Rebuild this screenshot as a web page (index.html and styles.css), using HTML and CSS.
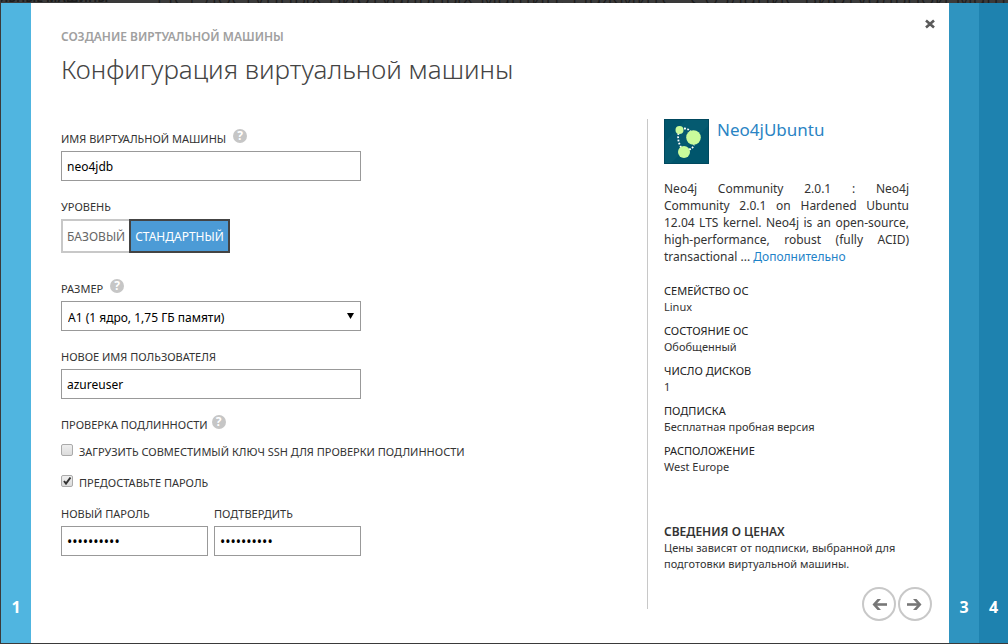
FILE: index.html
```html
<!DOCTYPE html>
<html lang="ru">
<head>
<meta charset="utf-8">
<title>Создание виртуальной машины</title>
<link rel="stylesheet" href="styles.css">
</head>
<body>
<div class="backdrop" aria-hidden="true"><span class="backdrop-tab">ВИРТУАЛЬНЫЕ МАШИНЫ</span><span class="backdrop-note">Нет доступных виртуальных машин. Нажмите "Создание виртуальной машины"</span></div>
<div class="wizard">
  <div class="rail rail-first">1</div>
  <main class="dialog">
    <button class="close" type="button" aria-label="Закрыть">
      <svg width="10" height="10" viewBox="0 0 10 10"><path d="M1 1.500 9 8.500M9 1.500 1 8.500" fill="none" stroke="#5a5a5a" stroke-width="2.600"/></svg>
    </button>
    <header class="heading">
      <p class="eyebrow">СОЗДАНИЕ ВИРТУАЛЬНОЙ МАШИНЫ</p>
      <h1 class="title">Конфигурация виртуальной машины</h1>
    </header>
    <div class="content">
      <form class="form">
        <div class="field">
          <div class="label-row"><label for="vm-name">ИМЯ ВИРТУАЛЬНОЙ МАШИНЫ</label><button class="help" type="button" aria-label="Справка">?</button></div>
          <input class="control" id="vm-name" type="text" value="neo4jdb">
        </div>
        <div class="field field-tier">
          <div class="label-row" id="tier">УРОВЕНЬ</div>
          <div class="tiers" role="group" aria-labelledby="tier">
            <button class="tier" type="button">БАЗОВЫЙ</button><button class="tier tier-on" type="button" aria-pressed="true">СТАНДАРТНЫЙ</button>
          </div>
        </div>
        <div class="field">
          <div class="label-row"><label for="size">РАЗМЕР</label><button class="help" type="button" aria-label="Справка">?</button></div>
          <div class="select-wrap">
            <select class="control select" id="size"><option>A1 (1 ядро, 1,75 ГБ памяти)</option></select>
            <svg class="arrow" width="7" height="6" viewBox="0 0 7 6"><path d="M0 0h7L3.500 6z" fill="#000"/></svg>
          </div>
        </div>
        <div class="field">
          <div class="label-row"><label for="user">НОВОЕ ИМЯ ПОЛЬЗОВАТЕЛЯ</label></div>
          <input class="control" id="user" type="text" value="azureuser">
        </div>
        <div class="auth" role="group" aria-labelledby="auth">
          <div class="label-row label-tight"><span id="auth">ПРОВЕРКА ПОДЛИННОСТИ</span><button class="help" type="button" aria-label="Справка">?</button></div>
          <label class="check-row"><input class="check" type="checkbox">ЗАГРУЗИТЬ СОВМЕСТИМЫЙ КЛЮЧ SSH ДЛЯ ПРОВЕРКИ ПОДЛИННОСТИ</label>
          <label class="check-row"><input class="check" type="checkbox" checked>ПРЕДОСТАВЬТЕ ПАРОЛЬ</label>
        </div>
        <div class="passwords">
          <div class="field"><div class="label-row"><label for="pw">НОВЫЙ ПАРОЛЬ</label></div><input class="control password" id="pw" type="password" value="neo4jadmin"></div>
          <div class="field"><div class="label-row"><label for="pw2">ПОДТВЕРДИТЬ</label></div><input class="control password" id="pw2" type="password" value="neo4jadmin"></div>
        </div>
      </form>
      <aside class="summary">
        <div class="product">
          <svg width="45" height="45" viewBox="0 0 45 45">
            <rect width="45" height="45" fill="#00556c"/>
            <path d="M22 0h23v6L6 45H0V24z" fill="#0a5f74" opacity=".5"/>
            <rect x=".5" y=".5" width="44" height="44" fill="none" stroke="#00485e"/>
            <path d="M20 9.500q5 0 7 4M14.500 14q-1.500 8 3 15M25 30.500q4-1 5-5" fill="none" stroke="#fff" stroke-width="1.800" stroke-dasharray="1.800 1.500"/>
            <circle cx="15.500" cy="11" r="4" fill="#c9fb9b"/><circle cx="29.500" cy="18.500" r="7.300" fill="#c9fb9b"/><circle cx="20" cy="33" r="6" fill="#c9fb9b"/>
          </svg>
          <h2 class="product-name">Neo4jUbuntu</h2>
        </div>
        <p class="about">Neo4j Community 2.0.1 : Neo4j Community&nbsp;2.0.1 on Hardened Ubuntu 12.04 LTS kernel. Neo4j is an open-source, high-performance, robust (fully ACID) transactional ... <a class="more" href="#">Дополнительно</a></p>
        <dl class="facts">
          <div class="fact"><dt>СЕМЕЙСТВО ОС</dt><dd>Linux</dd></div>
          <div class="fact"><dt>СОСТОЯНИЕ ОС</dt><dd>Обобщенный</dd></div>
          <div class="fact"><dt>ЧИСЛО ДИСКОВ</dt><dd>1</dd></div>
          <div class="fact"><dt>ПОДПИСКА</dt><dd>Бесплатная пробная версия</dd></div>
          <div class="fact"><dt>РАСПОЛОЖЕНИЕ</dt><dd>West Europe</dd></div>
        </dl>
        <h3 class="price-title">СВЕДЕНИЯ О ЦЕНАХ</h3>
        <p class="price">Цены зависят от подписки, выбранной для подготовки виртуальной машины.</p>
      </aside>
    </div>
    <nav class="steps">
      <button class="step" type="button" aria-label="Назад"><svg width="34" height="34" viewBox="0 0 34 34"><circle cx="17" cy="17" r="16" fill="#fff" stroke="#c8c8c8" stroke-width="2"/><path d="M12 17.500H25" fill="none" stroke="#777" stroke-width="2.600"/><path d="M15.500 12h3.500l-5 5.500 5 5.500h-3.500l-5-5.500z" fill="#777"/></svg></button>
      <button class="step" type="button" aria-label="Далее"><svg width="34" height="34" viewBox="0 0 34 34"><circle cx="17" cy="17" r="16" fill="#fff" stroke="#c8c8c8" stroke-width="2"/><path d="M9 17.500H22" fill="none" stroke="#777" stroke-width="2.600"/><path d="M18.500 12h-3.500l5 5.500-5 5.500h3.500l5-5.500z" fill="#777"/></svg></button>
    </nav>
  </main>
  <div class="rail rail-third">3</div>
  <div class="rail rail-fourth">4</div>
</div>
</body>
</html>
```
FILE: styles.css
```css
* { box-sizing: border-box; }
body {
  margin: 0;
  min-height: 100vh;
  display: flex;
  flex-direction: column;
  padding: 0 0 1px 1px;
  background: #3a3a3a;
  color: #333;
  font: 12px/16px "Noto Sans", "Open Sans", sans-serif;
}
h1, h2, h3, p, dl, dd { margin: 0; }
button, input, select { font: inherit; }

.backdrop {
  display: flex;
  align-items: flex-start;
  gap: 48px;
  height: 3px;
  overflow: hidden;
  white-space: nowrap;
  color: #1c1c1c;
}
.backdrop-tab { margin: -10px 0 0 -48px; font-weight: 700; }
.backdrop-note { margin-top: -20px; font-size: 24px; line-height: 32px; font-weight: 300; }

.wizard { flex: 1; display: flex; background: #fff; }
.rail {
  flex: 0 0 30px;
  display: flex;
  align-items: flex-end;
  justify-content: center;
  padding-bottom: 24px;
  color: #fff;
  font-size: 16px;
  line-height: 24px;
  font-weight: 700;
}
.rail-first { background: #50b5e0; }
.rail-third { background: #2f94c0; }
.rail-fourth { flex-basis: 29px; background: #1e82af; }

.dialog {
  position: relative;
  flex: 1;
  display: flex;
  flex-direction: column;
  padding: 24px 17px 22px 30px;
}
.close {
  position: absolute;
  top: 16px;
  right: 14px;
  display: flex;
  padding: 0;
  border: 0;
  background: none;
}
.eyebrow { color: #a0a0a0; font-weight: 600; line-height: 20px; }
.title { padding-top: 2px; color: #444; font-size: 26px; font-weight: 300; line-height: 40px; }

.content { flex: 1; display: flex; padding-top: 30px; }
.form { flex: 1; padding-top: 12px; font-size: 11px; }
.field { display: flex; flex-direction: column; max-width: 300px; margin-bottom: 18px; }
.field-tier { margin-bottom: 28px; }
.label-row { display: flex; align-items: center; gap: 7px; height: 16px; margin-bottom: 4px; white-space: nowrap; }
.label-tight { gap: 4px; }
.help {
  width: 14px;
  height: 14px;
  margin-bottom: 6px;
  padding: 0;
  border: 0;
  border-radius: 50%;
  background: #c6c6c6;
  color: #fff;
  font-size: 12px;
  font-weight: 700;
  line-height: 14px;
  text-align: center;
}
.control {
  width: 100%;
  height: 30px;
  padding: 0 5px;
  border: 1px solid #999;
  border-radius: 0;
  background: #fff;
  color: #000;
  font-size: 12px;
}
.password { font-size: 14px; }
.select-wrap { position: relative; }
.select { appearance: none; display: block; padding: 3px 6px 0; }
.arrow { position: absolute; top: 12px; right: 7px; pointer-events: none; }
.tiers { display: flex; }
.tier {
  height: 34px;
  padding: 1px 4px 0;
  border: 2px solid #c8c8c8;
  background: #fff;
  color: #666;
  font-size: 12px;
}
.tier:first-child { border-right: 0; }
.tier-on { border-color: #444; background: #4c9bd6; color: #fff; }
.auth { display: flex; flex-direction: column; gap: 15px; margin-bottom: 15px; }
.auth .label-row { margin-bottom: -4px; }
.check-row { display: flex; align-items: center; gap: 6px; line-height: 16px; white-space: nowrap; }
.check {
  appearance: none;
  width: 12px;
  height: 12px;
  margin: 0 0 4px;
  border: 1px solid #aaa;
  border-radius: 2px;
  background: linear-gradient(#eee, #dcdcdc);
}
.check:checked {
  background: url("data:image/svg+xml,%3Csvg xmlns='http://www.w3.org/2000/svg' viewBox='0 0 10 10'%3E%3Cpath d='M2 5l2 2.500L8.500 1.500' fill='none' stroke='%23333' stroke-width='2'/%3E%3C/svg%3E"), linear-gradient(#eee, #dcdcdc);
}
.passwords { display: flex; gap: 6px; max-width: 300px; }
.passwords .field { flex: 1; margin: 0; }

.summary {
  flex: 0 0 285px;
  margin-bottom: 10px;
  padding: 0 23px 0 16px;
  border-left: 1px solid #c8c8c8;
}
.product { display: flex; gap: 8px; }
.product-name { color: #2a84c4; font-size: 17px; font-weight: 400; line-height: 22px; }
.about { padding-top: 16px; line-height: 17px; text-align: justify; }
.more { color: #1e82c8; text-decoration: none; }
.facts { padding-top: 18px; font-size: 11px; }
.fact { margin-bottom: 8px; }
.fact dt { color: #222; }
.price-title { padding-top: 41px; font-size: 12px; line-height: 16px; font-weight: 600; }
.price { font-size: 11px; }
.steps { display: flex; justify-content: flex-end; gap: 2px; margin-top: -32px; }
.step { display: flex; padding: 0; border: 0; background: none; }
```
